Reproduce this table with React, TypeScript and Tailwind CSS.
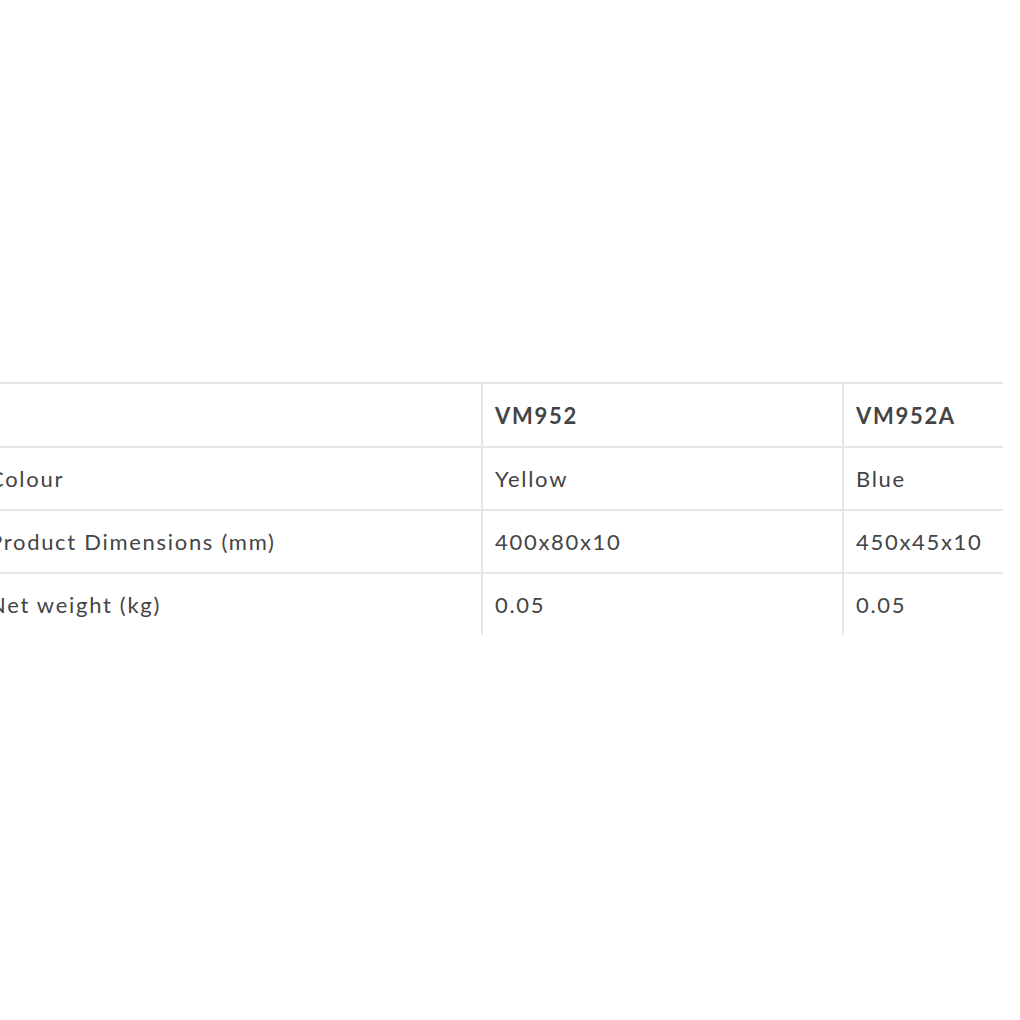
const rows = [
  { label: 'Colour', a: 'Yellow', b: 'Blue' },
  { label: 'Product Dimensions (mm)', a: '400x80x10', b: '450x45x10' },
  { label: 'Net weight (kg)', a: '0.05', b: '0.05' },
];

export default function App() {
  return (
    <div className="h-[1020px] w-[1020px] overflow-hidden bg-white pt-[382px] font-['Lato',sans-serif] text-[22px] tracking-[1.7px] text-[#444]">
      <div className="-ml-[25px] grid w-[1028px] grid-cols-[506px_361px_161px]">
        {/* header */}
        <div className="flex h-[64px] items-center border-t-2 border-[#e6e6e6] pl-[14px]" />
        <div className="flex h-[64px] items-center border-t-2 border-l-2 border-[#e6e6e6] pl-[12px] font-bold">VM952</div>
        <div className="flex h-[64px] items-center border-t-2 border-l-2 border-[#e6e6e6] pl-[12px] font-bold">VM952A</div>

        {rows.map((r) => (
          <>
            <div key={r.label} className="flex h-[63px] items-center border-t-2 border-[#e6e6e6] pl-[14px]">{r.label}</div>
            <div className="flex h-[63px] items-center border-t-2 border-l-2 border-[#e6e6e6] pl-[12px]">{r.a}</div>
            <div className="flex h-[63px] items-center border-t-2 border-l-2 border-[#e6e6e6] pl-[12px]">{r.b}</div>
          </>
        ))}
      </div>
    </div>
  );
}
